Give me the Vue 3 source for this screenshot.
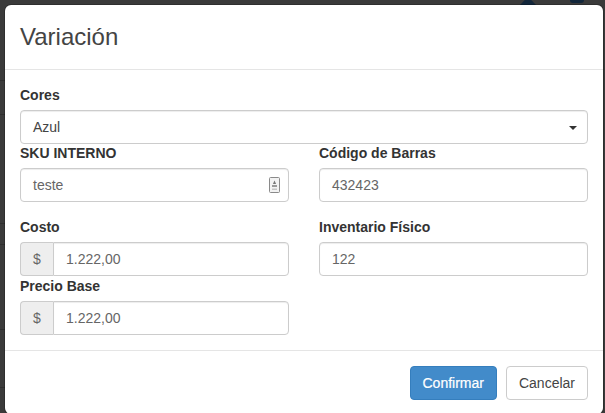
<template>
  <div class="page">
    <!-- what shows of the page behind the backdrop -->
    <span class="behind user"></span>
    <span class="behind flag"></span>
    <i class="rule" v-for="y in ruleLines" :key="y" :style="{ top: y + 'px' }"></i>

    <div class="modal">
      <div class="modalHeader">
        <h4 class="modalTitle">Variación</h4>
      </div>

      <div class="modalBody">
        <div class="field fieldSelect">
          <label>Cores</label>
          <div class="control select">
            <span>Azul</span>
            <i class="caret"></i>
          </div>
        </div>

        <div class="row">
          <div class="field">
            <label>SKU INTERNO</label>
            <div class="control">
              <span>teste</span>
              <svg class="contactIcon" width="11" height="16" viewBox="0 0 11 16">
                <rect x="0.5" y="0.5" width="10" height="15" rx="1" fill="#f2f2f2" stroke="#8a8a8a" />
                <path d="M5.5 3.5l1.6 3.5H3.9z" fill="#777" />
                <path d="M3 8h5v2H3z" fill="#999" />
                <path d="M3 11.5h5v1.5H3z" fill="#c4c4c4" />
              </svg>
            </div>
          </div>
          <div class="field">
            <label>Código de Barras</label>
            <div class="control"><span>432423</span></div>
          </div>
        </div>

        <div class="row rowSpaced">
          <div class="field">
            <label>Costo</label>
            <div class="inputGroup">
              <div class="addon">$</div>
              <div class="control"><span>1.222,00</span></div>
            </div>
          </div>
          <div class="field">
            <label>Inventario Físico</label>
            <div class="control"><span>122</span></div>
          </div>
        </div>

        <div class="row">
          <div class="field">
            <label>Precio Base</label>
            <div class="inputGroup">
              <div class="addon">$</div>
              <div class="control"><span>1.222,00</span></div>
            </div>
          </div>
        </div>
      </div>

      <div class="modalFooter">
        <button class="btn btnPrimary">Confirmar</button>
        <button class="btn">Cancelar</button>
      </div>
    </div>
  </div>
</template>

<script setup>
const ruleLines = [80, 114, 223, 244, 329, 387];
</script>

<style>
html,
body {
  margin: 0;
  overflow: hidden;
}
</style>

<style scoped>
.page {
  position: relative;
  width: 605px;
  height: 413px;
  overflow: hidden;
  background: #3a3a3a;
  font-family: "Liberation Sans", Arial, sans-serif;
  font-size: 14px;
  line-height: 20px;
  color: #333;
  padding: 5px 2px 0 5px;
  box-sizing: border-box;
}

.behind {
  position: absolute;
  background: #12263a;
}

.user {
  left: 520px;
  top: 0;
  width: 16px;
  height: 5px;
  clip-path: polygon(30% 0, 70% 0, 100% 100%, 0 100%);
}

.flag {
  left: 570px;
  top: 0;
  width: 14px;
  height: 3px;
  border-radius: 0 0 6px 6px;
}

.rule {
  position: absolute;
  left: 0;
  width: 5px;
  height: 1px;
  background: #2e2e2e;
}

.modal {
  position: relative;
  height: 409px;
  background: #fff;
  border-radius: 6px;
  box-shadow: 0 0 0 1px rgba(0, 0, 0, 0.2);
}

.modalHeader {
  height: 64px;
  box-sizing: content-box;
  border-bottom: 1px solid #e5e5e5;
  display: flex;
  align-items: center;
  padding: 0 15px;
}

.modalTitle {
  margin: 0;
  font-size: 24px;
  font-weight: 400;
  line-height: 26px;
  color: #444;
}

.modalBody {
  padding: 15px;
}

.fieldSelect {
  margin-bottom: -1px;
}

.row {
  display: grid;
  grid-template-columns: 269px 269px;
  column-gap: 30px;
}

.rowSpaced {
  margin-top: 15px;
}

label {
  display: block;
  margin-bottom: 5px;
  font-weight: 700;
}

.control {
  flex: 1;
  height: 34px;
  box-sizing: border-box;
  border: 1px solid #ccc;
  border-radius: 4px;
  padding: 6px 12px;
  color: #666;
  background: #fff;
  box-shadow: inset 0 1px 1px rgba(0, 0, 0, 0.075);
  display: flex;
  align-items: center;
  justify-content: space-between;
}

.select {
  color: #444;
  padding-right: 10px;
}

.caret {
  width: 0;
  height: 0;
  margin-top: 1px;
  border-top: 4px solid #333;
  border-left: 4px solid transparent;
  border-right: 4px solid transparent;
}

.contactIcon {
  margin-right: -4px;
}

.inputGroup {
  display: flex;
}

.addon {
  width: 33px;
  height: 34px;
  box-sizing: border-box;
  border: 1px solid #ccc;
  border-right: 0;
  border-radius: 4px 0 0 4px;
  background: #eee;
  color: #666;
  display: flex;
  align-items: center;
  justify-content: center;
}

.inputGroup .control {
  border-radius: 0 4px 4px 0;
}

.modalFooter {
  border-top: 1px solid #e5e5e5;
  padding: 15px;
  display: flex;
  justify-content: flex-end;
  gap: 9px;
}

.btn {
  height: 34px;
  box-sizing: border-box;
  border: 1px solid #ccc;
  border-radius: 4px;
  padding: 6px 12px;
  background: #fff;
  color: #444;
  font: inherit;
}

.btnPrimary {
  background: #428bca;
  border-color: #357ebd;
  color: #fff;
  -webkit-text-stroke: 0.2px #fff;
}
</style>
